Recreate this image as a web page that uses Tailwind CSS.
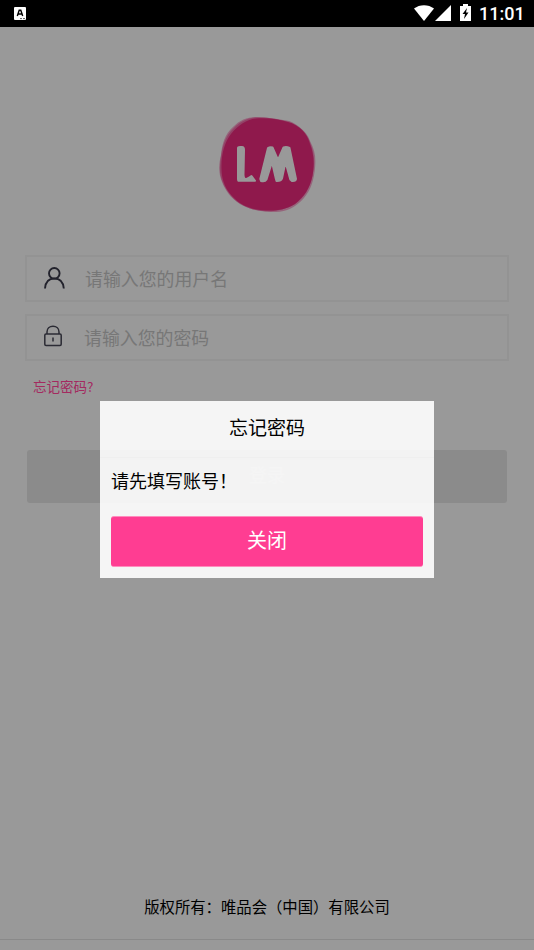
<!DOCTYPE html>
<html lang="zh-CN">
<head>
<meta charset="utf-8">
<title>登录</title>
<script src="https://cdn.jsdelivr.net/npm/@tailwindcss/browser@4"></script>
</head>
<body class="bg-[#999]">
<div class="relative flex h-[950px] w-[534px] flex-col overflow-hidden bg-[#999] font-['Noto_Sans_CJK_SC',sans-serif] font-normal text-black">
  <header class="flex h-[27px] shrink-0 items-center bg-black pl-[14px] pr-[9px] text-white">
    <svg class="h-[13px] w-3" viewBox="0 0 12 13"><rect width="12" height="13" rx="1" fill="#fff"/><path d="M3.3 9 5.2 3.3h1.6L8.7 9M4 7h4" fill="none" stroke="#000" stroke-width="1.4"/><path d="M6 11.6h2M9 11.6h2" stroke="#333" stroke-width=".8"/></svg>
    <svg class="-mt-px ml-auto h-4 w-5" viewBox="0 0 20 16"><path d="M0 3.6C5.6-.9 14.4-.9 20 3.6L10 16Z" fill="#fff"/></svg>
    <svg class="-mt-px ml-[1px] h-4 w-4" viewBox="0 0 16 16"><path d="M16 0v16H0Z" fill="#fff"/></svg>
    <svg class="-mt-[2px] ml-[9px] h-[17px] w-[11px]" viewBox="0 0 11 17"><path d="M0 2h3V0h5v2h3v15H0Z" fill="#fff"/><path d="M7 4 2.5 10H5L4 15 8.5 8.5H6Z" fill="#000"/></svg>
    <span class="ml-2 w-[46px] whitespace-nowrap font-[Roboto] text-[18px] font-medium leading-[27px]">11:01</span>
  </header>
  <main class="flex flex-1 flex-col px-[25px]">
    <svg class="mx-auto mt-[89px] h-[98px] w-[98px] shrink-0" viewBox="0 0 98 98">
      <path d="M39 1C49 1 58 3 67 5C77 8 88 13 92 25C97 34 98 42 97 52C96 63 93 74 86 82C78 91 68 96 58 96C46 96 36 95 26 90C15 85 8 76 4 66C0 56 1 47 3 39C4 28 7 18 15 11C22 4 29 1 39 1Z" fill="#93305e" fill-opacity=".5"/>
      <path d="M37 1.5C48 1 60 3 71 5C82 9 90 18 93 29C97 39 97 50 94 61C92 72 86 82 77 88C67 94 55 96 45 95C34 94 22 90 14 81C6 72 1 61 2 50C3 37 5 24 13 15C20 7 28 2 37 1.5Z" fill="#922455" fill-opacity=".55"/>
      <path d="M38 2.5C49 1.5 61 3.5 70 6C81 9 89 17 92 28C96 38 96.5 49 94.5 60C92 72 86 81 77 88C67 94 58 95 48 94.5C37 94 25 91 17 83C8 75 3.5 64 3.5 53C3 40 6 27 13 18C20 9 29 3.5 38 2.5Z" fill="#8f194c"/>
      <g fill="#999" stroke="#999" stroke-width="2" stroke-linejoin="round">
        <path d="M20 32Q20 31 22 31H24Q26 31 26 34L25.5 59Q25.8 64 29 62.7Q31 62 33.5 60L37 64.8H21Q20 65 20 63Z"/>
        <path d="M50 32Q52 30.7 54.5 31.5L60 44 65.5 31.5Q68.5 30.5 71.5 32L78 63Q77.8 65.3 74 65L72.3 63.5 67.5 46 64 62.5Q63 65.2 58.5 65L57.8 62.5 54 46 48.5 63.5Q47 66 43 65L42.3 63Z"/>
      </g>
    </svg>
    <div class="mt-[41px] flex h-[47px] w-[484px] shrink-0 items-center border-2 border-[#939393] pl-[17px]">
      <svg class="-mt-[2px] h-[22px] w-[21px]" viewBox="0 0 21 22" fill="none" stroke="#22222c" stroke-width="1.9"><circle cx="10.3" cy="6.3" r="5.3"/><path d="M1 21.5C1.5 15 5 11.5 10.3 11.5S19.2 15 19.8 21.5"/></svg>
      <span class="-mt-px ml-[20px] text-[17.9px] leading-6 text-[#777]">请输入您的用户名</span>
    </div>
    <div class="mt-[12px] flex h-[47px] w-[484px] shrink-0 items-center border-2 border-[#939393] pl-[17px]">
      <svg class="-mt-[3px] h-[22px] w-[18px]" viewBox="0 0 18 22" fill="none" stroke="#2b2b34" stroke-width="1.5"><rect x=".8" y="9" width="16.4" height="11.5" rx="1.2"/><path d="M3 9V7C3 3.5 5.5 1.2 9 1.2S15 3.5 15 7v2M9 12.5v4"/></svg>
      <span class="-mt-px ml-[22px] text-[17.9px] leading-6 text-[#777]">请输入您的密码</span>
    </div>
    <a class="ml-[8px] mt-[15px] text-[13.5px] leading-5 text-[#a42a60]">忘记密码?</a>
    <div class="ml-[2px] mt-[54px] flex h-[53px] w-[480px] shrink-0 items-center justify-center rounded-[3px] bg-[#8b8b8b] pb-[5px] text-[18px] text-[#999]">登录</div>
    <p class="mb-[22px] mt-auto text-center text-[15.35px] leading-[22px]">版权所有：唯品会（中国）有限公司</p>
  </main>
  <div class="h-[11px] shrink-0 border-t border-[#898989]"></div>

  <section class="absolute left-[100px] top-[401px] flex h-[177px] w-[334px] flex-col bg-white/90 px-[11px]">
    <h2 class="-mx-[11px] h-[57px] border-b border-[#efefef] text-center text-[19px] leading-[51px]">忘记密码</h2>
    <p class="h-[58px] text-[18px] leading-[45px]">请先填写账号！</p>
    <button class="h-[51px] rounded-[3px] border-y border-[#ff8cbd] bg-[#ff3d92] pb-[3px] text-[20px] leading-[46px] text-white">关闭</button>
  </section>
</div>
</body>
</html>
